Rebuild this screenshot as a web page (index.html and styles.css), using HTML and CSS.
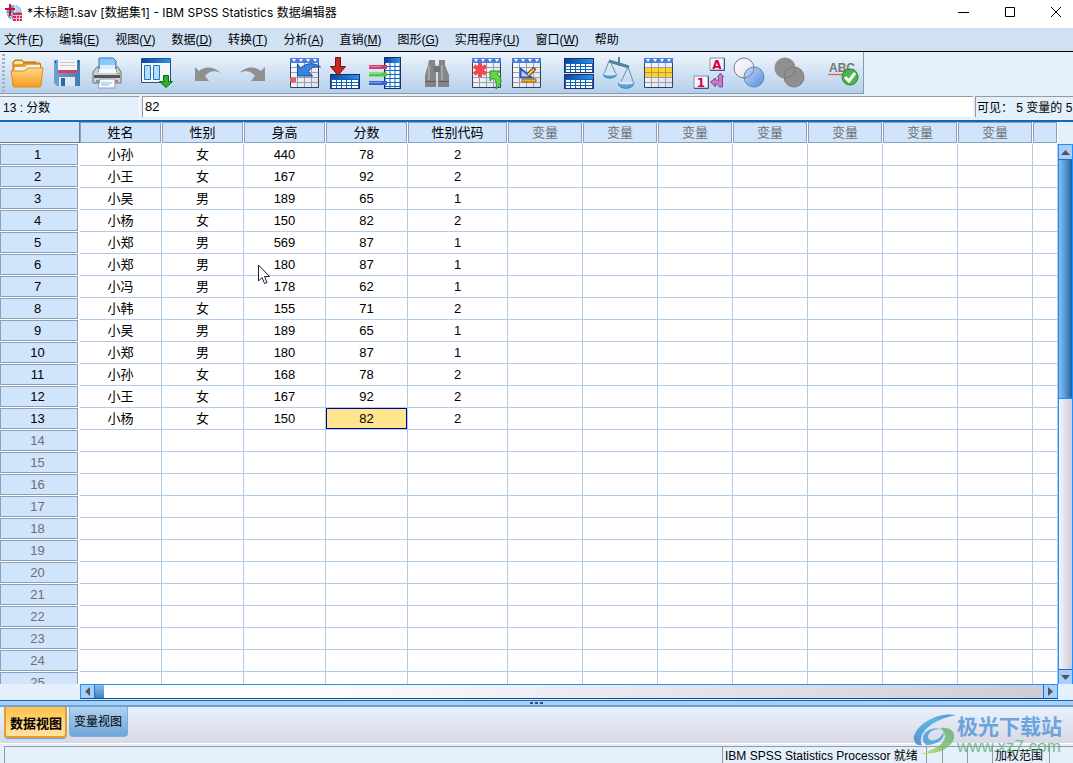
FILE: index.html
```html
<!DOCTYPE html>
<html lang="zh-CN">
<head>
<meta charset="utf-8">
<title>*未标题1.sav [数据集1] - IBM SPSS Statistics 数据编辑器</title>
<link rel="stylesheet" href="styles.css">
</head>
<body>
<svg class="defs" aria-hidden="true">
  <defs>
    <linearGradient id="gBlue" x1="0" x2="1"><stop offset="0" stop-color="#0a45a8"/><stop offset="1" stop-color="#2b93ea"/></linearGradient>
    <linearGradient id="gGold" x1="0" y1="0" x2="0" y2="1"><stop offset="0" stop-color="#ffd98a"/><stop offset="1" stop-color="#f79a1c"/></linearGradient>
    <linearGradient id="gPaper" x1="0" y1="0" x2="1" y2="1"><stop offset="0" stop-color="#fff"/><stop offset="1" stop-color="#dcdfee"/></linearGradient>
    <linearGradient id="gSky" x1="0" y1="0" x2="1" y2="1"><stop offset="0" stop-color="#c8def8"/><stop offset="1" stop-color="#5588e0"/></linearGradient>
    <linearGradient id="gDisk" x1="0" y1="0" x2="1" y2="0"><stop offset="0" stop-color="#6ea3cf"/><stop offset="1" stop-color="#3f7eb5"/></linearGradient>
    <linearGradient id="gMarkBlue" x1="1" y1="0" x2="0" y2="1"><stop offset="0" stop-color="#3a78c4"/><stop offset="0.4" stop-color="#3fa9e6"/><stop offset="1" stop-color="#3c7fc8"/></linearGradient>
    <linearGradient id="gMarkGreen" x1="1" y1="0" x2="0" y2="1"><stop offset="0" stop-color="#5fae78"/><stop offset="0.5" stop-color="#6fc06a"/><stop offset="1" stop-color="#d3dc4c"/></linearGradient>
    <g id="sheet">
      <path d="M1.500 1.500h28v29h-28z" fill="url(#gPaper)" stroke="#34425e"/>
      <path d="M1 1h29v5H1z" fill="#4a7ee0"/>
      <path d="M3 2h4l-2 3zM10 2h4l-2 3zM17 2h4l-2 3zM24 2h4l-2 3z" fill="#fff"/>
      <path d="M8.500 6v24M15.500 6v24M22.500 6v24M2 10.500h27M2 15.500h27M2 20.500h27M2 25.500h27" stroke="#9a9fae" fill="none"/>
    </g>
    <g id="strip">
      <path d="M1 0h30v15H1z" fill="#262b60"/>
      <path d="M2 1h28v4H2z" fill="url(#gBlue)"/>
      <path d="M2 5h28v9H2z" fill="#0d62b8"/>
      <path d="M3 6h4v2H3zM8 6h4v2H8zM13 6h4v2h-4zM18 6h4v2h-4zM23 6h6v2h-6zM3 9h4v2H3zM8 9h4v2H8zM13 9h4v2h-4zM18 9h4v2h-4zM23 9h6v2h-6zM3 12h4v2H3zM8 12h4v2H8zM13 12h4v2h-4zM18 12h4v2h-4zM23 12h6v2h-6z" fill="#fff"/>
    </g>
  </defs>
</svg>

<div class="app">
  <header class="titlebar">
    <svg class="logo" viewBox="0 0 18 18"><circle cx="9" cy="8.500" r="7.500" fill="#6f9cc9"/><path d="M9 1a8 8 0 0 1 7 7H9z" fill="#b9d0e6"/><path d="M3 3l4 13M10 1v15M2 10h14" stroke="#e3edf6" fill="none"/><path d="M4 0h2v4h4v2H6v6H4V6H0V4h4z" fill="#c8102e"/><path d="M8 9h9v8H8z" fill="#d42a4c"/><path d="M8 11.500h9M8 14.500h9M11.500 12v5M14.500 12v5" stroke="#f3c3cd"/></svg>
    <h1 class="title">*未标题1.sav [数据集1] - IBM SPSS Statistics 数据编辑器</h1>
    <div class="window-buttons">
      <button type="button" aria-label="最小化"><svg viewBox="0 0 12 12"><path d="M0 6.500h11"/></svg></button>
      <button type="button" aria-label="最大化"><svg viewBox="0 0 12 12"><path d="M1.500 1.500h9v9h-9z"/></svg></button>
      <button type="button" aria-label="关闭"><svg viewBox="0 0 12 12"><path d="M1 1l10 10M11 1L1 11"/></svg></button>
    </div>
  </header>

  <nav class="menubar">
    <button type="button">文件(<u>F</u>)</button>
    <button type="button">编辑(<u>E</u>)</button>
    <button type="button">视图(<u>V</u>)</button>
    <button type="button">数据(<u>D</u>)</button>
    <button type="button">转换(<u>T</u>)</button>
    <button type="button">分析(<u>A</u>)</button>
    <button type="button">直销(<u>M</u>)</button>
    <button type="button">图形(<u>G</u>)</button>
    <button type="button">实用程序(<u>U</u>)</button>
    <button type="button">窗口(<u>W</u>)</button>
    <button type="button">帮助</button>
  </nav>

  <div class="toolbar-row">
    <div class="toolbar" role="toolbar">
      <span class="grip"></span>
      <div class="group first">
        <button type="button" aria-label="打开"><svg viewBox="0 0 32 32"><path d="M2 9V5l2-2h7l2 2h12v4z" fill="#e89a20" stroke="#b96c0c"/><path d="M3 5l2-1h6l2 3h12v2H3z" fill="#ffe4a0"/><path d="M2 9l1-1h8l2-2h16l1 3-1 19H2z" fill="#f6a623" stroke="#c4720e"/><path d="M4 10h10l2-2h13v7H3z" fill="#e9f3fc"/><path d="M0 14h13l4-3h15l-2 17-1 2H3l-1-2z" fill="url(#gGold)" stroke="#e8890c"/></svg></button>
        <button type="button" aria-label="保存"><svg viewBox="0 0 32 32"><path d="M3 3h26v26H6l-3-3z" fill="url(#gDisk)"/><path d="M7 3h19v12H7z" fill="#f2f4f8"/><path d="M9 5.500h15M9 8.500h15" stroke="#c3c8d4"/><path d="M7 13h19v3H7z" fill="#e23a5c"/><path d="M8 20h16v9H8z" fill="#dfe6ef"/><path d="M10 21h4v8h-4z" fill="#31689c"/><path d="M4 4h1v2H4zM27 4h1v2h-1z" fill="#285b8c"/></svg></button>
        <button type="button" aria-label="打印"><svg viewBox="0 0 32 32"><path d="M8 1h14l3 3v12H8z" fill="#8ec8f6" stroke="#3578b4"/><path d="M9 8h15v8H9z" fill="#d6edff"/><path d="M6 10h2v5h17v-5h2l3 5v11H2V15z" fill="#cfcfd2" stroke="#707076"/><path d="M8 12h17v4H8z" fill="#f5f9fd"/><path d="M3 18h26v3H3z" fill="#55565c"/><path d="M5 23h22v3H5z" fill="#8d8e94"/><path d="M9 22h15v9H7z" fill="#f6faff" stroke="#91a0b2"/><path d="M10 26h11M10 28h8" stroke="#7dbbe9"/><path d="M26 16h3v1h-3z" fill="#66b82e"/></svg></button>
      </div>
      <div class="group">
        <button type="button" aria-label="对话框调用"><svg viewBox="0 0 32 32"><path d="M.5 1.500h29v24H.5z" fill="#f4f7fc" stroke="#2f4f88"/><path d="M1 2h28v4H1z" fill="url(#gBlue)"/><path d="M3.500 8.500h6v14h-6zM12.500 8.500h6v14h-6z" fill="#b6dcfb" stroke="#2076bd"/><path d="M22.500 18.500h5v6h4l-6.500 6-6.500-6h4z" fill="#2eaf28" stroke="#116b14"/></svg></button>
      </div>
      <div class="group loose">
        <button type="button" aria-label="撤销"><svg viewBox="0 0 32 32"><path d="M4 10l4 4c6-5 14-5 22 2-7-3-12-2-16 3l4 5H4z" fill="#909090"/></svg></button>
        <button type="button" aria-label="重做"><svg viewBox="0 0 32 32"><path d="M30 10l-4 4c-6-5-14-5-22 2 7-3 12-2 16 3l-4 5h14z" fill="#909090"/></svg></button>
      </div>
      <div class="group wide">
        <button type="button" aria-label="转至个案"><svg viewBox="0 0 32 32"><use href="#sheet"/><path d="M1 21h6v4H1z" fill="#ee5866"/><path d="M8.500 7l3 4c6-5 13-6 20-1-8-1-10 1-12 5l4 4h-15z" fill="#3c83dc" stroke="#124c9e"/></svg></button>
        <button type="button" aria-label="转至变量"><svg viewBox="0 0 32 32"><use href="#strip" y="17"/><path d="M6.500.5h5v9h5l-7.500 9-7.500-9h5z" fill="#c8281c" stroke="#6f1410"/></svg></button>
        <button type="button" aria-label="变量"><svg viewBox="0 0 32 32"><path d="M15 0h17v32H15z" fill="#262b60"/><path d="M16 1h15v5H16z" fill="url(#gBlue)"/><path d="M16 6h15v25H16z" fill="#0d69c4"/><path d="M18.500 6v25M23.500 6v25M28.500 6v25" stroke="#fff" stroke-width="4" stroke-dasharray="3 1"/><path d="M0 10h18" stroke="#d43868" stroke-width="4"/><path d="M0 17.500h18" stroke="#57c637" stroke-width="4"/><path d="M0 26h18" stroke="#3a64dc" stroke-width="4"/><path d="M0 9.500h12M0 16.500h12M0 25.500h12" stroke="#fff" opacity=".4"/></svg></button>
      </div>
      <div class="group mid">
        <button type="button" aria-label="查找"><svg viewBox="0 0 32 32"><path d="M8 3h6v4l1 3v20H4V18L7 8zM18 3h6v5l4 10v12H17V10l1-3z" fill="#858585"/><path d="M13 9h6v6h-6z" fill="#747474"/><path d="M4 24.500h11M17 24.500h11" stroke="#5f5f5f"/><path d="M8 8v15M21 8v15" stroke="#a6a6a6" stroke-width="2"/></svg></button>
      </div>
      <div class="group">
        <button type="button" aria-label="插入个案"><svg viewBox="0 0 32 32"><use href="#sheet"/><path d="M9 6v14M3 9l12 8M15 9L3 17" stroke="#f4464c" stroke-width="4"/><path d="M19 14h10l-3 3c6 4 5 10-1 15 1-6 0-9-3-11l-3 3z" fill="#65d544" stroke="#229522"/></svg></button>
        <button type="button" aria-label="插入变量"><svg viewBox="0 0 32 32"><use href="#sheet"/><path d="M9.500 11.500v9h11z" fill="#b9d4fa" stroke="#2659c0" stroke-width="2"/><path d="M17 18l7-7" stroke="#694813" stroke-width="4"/><path d="M17 18l6-6" stroke="#f3cc56" stroke-width="2"/><path d="M11 22h14v3H11z" fill="#f6b31b" stroke="#9e640b"/></svg></button>
      </div>
      <div class="group mid">
        <button type="button" aria-label="拆分文件"><svg viewBox="0 0 32 32"><use href="#strip" y="1"/><use href="#strip" y="17"/></svg></button>
        <button type="button" aria-label="加权个案"><svg viewBox="0 0 32 32"><path d="M16 0v9" stroke="#55839c" stroke-width="2"/><path d="M6 4l20 6" stroke="#55839c" stroke-width="3"/><path d="M6 4L1 17M7 4l6 13M25 10l-8 17M25 10l6 17" stroke="#668fa9" fill="none"/><path d="M0 17h14c-1 5-13 6-14 0zM15 26h16c-1 7-15 7-16 0z" fill="#5ba5dc" stroke="#3d83af"/><ellipse cx="7" cy="17" rx="7" ry="1.500" fill="#d6ebf7"/><ellipse cx="23" cy="26" rx="8" ry="1.500" fill="#d6ebf7"/></svg></button>
        <button type="button" aria-label="选择个案"><svg viewBox="0 0 32 32"><use href="#sheet"/><path d="M2 11h27v9H2z" fill="#fad42c"/><path d="M2 15.500h27M8.500 11v9M15.500 11v9M22.500 11v9" stroke="#b89a36"/></svg></button>
      </div>
      <div class="group">
        <button type="button" aria-label="值标签"><svg viewBox="0 0 32 32"><path d="M17 1h14v12H17zM1 19h14v12H1z" fill="#f5f8fd" stroke="#8590ad"/><path d="M31.500 1v12.500H17M15.500 19v12.500H1" stroke="#44548a" fill="none"/><text x="24" y="12" class="glyph">A</text><text x="8" y="30" class="glyph">1</text><path d="M27.500 16l3 4h-1v10h-3c-1-2-3-3-4-3v3l-5-5 5-4v2c1 0 2 0 3 1v-4h-1z" fill="#c878cc" stroke="#8a4590"/></svg></button>
        <button type="button" aria-label="使用变量集"><svg viewBox="0 0 32 32"><circle cx="11" cy="11" r="10" fill="url(#gPaper)"/><circle cx="21" cy="20" r="10" fill="url(#gSky)" stroke="#70809d"/><circle cx="11" cy="11" r="10" fill="none" stroke="#70809d"/></svg></button>
        <button type="button" aria-label="显示所有变量"><svg viewBox="0 0 32 32"><circle cx="12" cy="11" r="10.500" fill="#8f8f8f"/><circle cx="21" cy="20" r="10" fill="#8f8f8f" stroke="#7b7b7b"/><path d="M11 21a10 10 0 0 0 11-11" fill="none" stroke="#7b7b7b"/></svg></button>
      </div>
      <div class="group wide">
        <button type="button" aria-label="拼写检查"><svg viewBox="0 0 32 32"><text x="15" y="15" class="abc">ABC</text><path d="M1 18l2-1 2 1 2-1 2 1 2-1 2 1 2-1" fill="none" stroke="#e33a20"/><circle cx="23" cy="20" r="8" fill="#4eb44d" stroke="#278735"/><path d="M18 20l4 4 6-8" fill="none" stroke="#fff" stroke-width="3"/></svg></button>
      </div>
    </div>
  </div>

  <div class="editbar">
    <output class="cell-name" for="cell-value">13 : 分数</output>
    <input class="cell-value" id="cell-value" aria-label="13 : 分数" value="82">
    <div class="visible-info">可见： 5 变量的 5</div>
  </div>

  <main class="editor">
    <div class="sheet">
      <table class="grid">
        <colgroup><col class="c-head"><col class="c-var" span="4"><col class="c-code"><col class="c-empty" span="7"><col></colgroup>
        <thead>
          <tr><td class="corner"></td><th>姓名</th><th>性别</th><th>身高</th><th>分数</th><th>性别代码</th><th class="off">变量</th><th class="off">变量</th><th class="off">变量</th><th class="off">变量</th><th class="off">变量</th><th class="off">变量</th><th class="off">变量</th><th class="off"></th></tr>
        </thead>
        <tbody>
          <tr><th>1<td>小孙<td>女<td>440<td>78<td>2<td><td><td><td><td><td><td><td>
          <tr><th>2<td>小王<td>女<td>167<td>92<td>2<td><td><td><td><td><td><td><td>
          <tr><th>3<td>小吴<td>男<td>189<td>65<td>1<td><td><td><td><td><td><td><td>
          <tr><th>4<td>小杨<td>女<td>150<td>82<td>2<td><td><td><td><td><td><td><td>
          <tr><th>5<td>小郑<td>男<td>569<td>87<td>1<td><td><td><td><td><td><td><td>
          <tr><th>6<td>小郑<td>男<td>180<td>87<td>1<td><td><td><td><td><td><td><td>
          <tr><th>7<td>小冯<td>男<td>178<td>62<td>1<td><td><td><td><td><td><td><td>
          <tr><th>8<td>小韩<td>女<td>155<td>71<td>2<td><td><td><td><td><td><td><td>
          <tr><th>9<td>小吴<td>男<td>189<td>65<td>1<td><td><td><td><td><td><td><td>
          <tr><th>10<td>小郑<td>男<td>180<td>87<td>1<td><td><td><td><td><td><td><td>
          <tr><th>11<td>小孙<td>女<td>168<td>78<td>2<td><td><td><td><td><td><td><td>
          <tr><th>12<td>小王<td>女<td>167<td>92<td>2<td><td><td><td><td><td><td><td>
          <tr><th>13<td>小杨<td>女<td>150<td class="active">82<td>2<td><td><td><td><td><td><td><td>
        </tbody>
        <tbody class="unused">
          <tr><th>14<td><td><td><td><td><td><td><td><td><td><td><td><td>
          <tr><th>15<td><td><td><td><td><td><td><td><td><td><td><td><td>
          <tr><th>16<td><td><td><td><td><td><td><td><td><td><td><td><td>
          <tr><th>17<td><td><td><td><td><td><td><td><td><td><td><td><td>
          <tr><th>18<td><td><td><td><td><td><td><td><td><td><td><td><td>
          <tr><th>19<td><td><td><td><td><td><td><td><td><td><td><td><td>
          <tr><th>20<td><td><td><td><td><td><td><td><td><td><td><td><td>
          <tr><th>21<td><td><td><td><td><td><td><td><td><td><td><td><td>
          <tr><th>22<td><td><td><td><td><td><td><td><td><td><td><td><td>
          <tr><th>23<td><td><td><td><td><td><td><td><td><td><td><td><td>
          <tr><th>24<td><td><td><td><td><td><td><td><td><td><td><td><td>
          <tr><th>25<td><td><td><td><td><td><td><td><td><td><td><td><td>
        </tbody>
      </table>
    </div>
    <div class="vscroll">
      <button type="button" aria-label="向上滚动"><svg viewBox="0 0 9 5"><path d="M0 5l4.500-5L9 5z"/></svg></button>
      <div class="vtrack"><div class="vthumb"></div></div>
      <button type="button" aria-label="向下滚动"><svg viewBox="0 0 9 5"><path d="M0 0l4.500 5L9 0z"/></svg></button>
    </div>
    <div class="hscroll">
      <button type="button" aria-label="向左滚动"><svg viewBox="0 0 5 9"><path d="M5 0L0 4.500 5 9z"/></svg></button>
      <div class="htrack"><div class="hthumb"></div></div>
      <button type="button" aria-label="向右滚动"><svg viewBox="0 0 5 9"><path d="M0 0l5 4.500L0 9z"/></svg></button>
    </div>
    <svg class="pointer" viewBox="0 0 13 20"><path d="M1.500 1v16l3.500-3.500 2.500 6 2.500-1-2.500-6h5z" fill="#fff" stroke="#1c1c2c"/></svg>
  </main>

  <div class="splitter"><i></i><i></i><i></i></div>

  <div class="tabs" role="tablist">
    <button type="button" class="tab selected" role="tab" aria-selected="true">数据视图</button>
    <button type="button" class="tab" role="tab" aria-selected="false">变量视图</button>
  </div>

  <footer class="statusbar">
    <span class="s-message"></span>
    <span class="s-processor">IBM SPSS Statistics Processor 就绪</span>
    <span class="s-small"></span>
    <span class="s-mid"></span>
    <span class="s-mid"></span>
    <span class="s-weight">加权范围</span>
    <span class="s-last"></span>
  </footer>

  <div class="watermark">
    <svg viewBox="0 0 44 42"><path d="M43 2C28-1 6 8 1 23c-1 7 3 10 8 9C4 23 14 8 43 2z" fill="url(#gMarkBlue)"/><path d="M13 32C5 24 14 13 27 16c-8 0-12 4-12 8 1 4 4 4 7 3 4-1 7-4 8-8 3 7-7 13-17 13z" fill="#419bd8"/><path d="M27 15c13-2 18 7 11 16-7 8-18 10-31 10 13-4 24-9 25-17 0-4-2-7-5-9z" fill="url(#gMarkGreen)"/></svg>
    <div class="wm-text"><b>极光下载站</b><span>www.xz7.com</span></div>
  </div>
</div>
</body>
</html>
```
FILE: styles.css
```css
* { box-sizing: border-box; }

body {
  margin: 0;
  background: #e4f0fc;
  color: #000;
  font: 13px/16px "Liberation Sans", "Noto Sans CJK SC", sans-serif;
}

button {
  margin: 0;
  padding: 0;
  border: 0;
  background: none;
  color: inherit;
  font: inherit;
}

svg { display: block; }
.defs { position: absolute; width: 0; height: 0; }

.app {
  position: relative;
  display: flex;
  flex-direction: column;
  height: 100vh;
  overflow: hidden;
}

/* Title bar */
.titlebar {
  display: flex;
  align-items: center;
  flex: none;
  height: 28px;
  padding: 0 6px 0 5px;
  background: #fff;
}
.logo { width: 18px; height: 18px; margin: 0 4px 2px 0; }
.title {
  flex: 1;
  margin: 0 0 2px;
  font: 12px/16px Inter, "Noto Sans CJK SC", sans-serif;
  white-space: nowrap;
}
.window-buttons { display: flex; margin-bottom: 4px; }
.window-buttons button { width: 46px; padding: 0 17px; }
.window-buttons button:last-child { padding-right: 5px; width: 34px; }
.window-buttons svg { width: 12px; height: 12px; fill: none; stroke: #000; }

/* Menu bar */
.menubar {
  display: flex;
  flex: none;
  gap: 16px;
  height: 24px;
  padding: 0 4px;
  border-bottom: 1px solid #000;
  background: #cfe1f3;
  font-size: 12px;
  white-space: nowrap;
}

/* Toolbar */
.toolbar-row { display: flex; flex: none; height: 42px; }
.toolbar {
  display: flex;
  align-items: center;
  width: 864px;
  border-right: 1px solid #8d98a8;
  border-bottom: 1px solid #8d98a8;
  background: linear-gradient(#eef5fd, #b4cfeb);
}
.grip {
  width: 3px;
  height: 38px;
  margin-left: 2px;
  background: repeating-linear-gradient(#a5b0c0 0 2px, transparent 2px 4px);
}
.group { display: flex; gap: 8px; margin-left: 18px; }
.group.first { margin-left: 6px; }
.group.mid { margin-left: 20px; }
.group.wide { margin-left: 22px; }
.group.loose { gap: 12px; }
.group svg { width: 32px; height: 32px; overflow: visible; }
.glyph { font: bold 12px "DejaVu Sans", sans-serif; fill: #e00040; text-anchor: middle; }
.abc { font: bold 12px "Liberation Sans", sans-serif; fill: #777; text-anchor: middle; }

/* Cell editor */
.editbar { display: flex; flex: none; height: 28px; padding: 2px 0 3px; border-bottom: 2px solid #1468b8; }
.cell-name {
  width: 140px;
  padding: 3px;
  border-top: 1px solid #999;
  border-right: 1px solid #fff;
  font-size: 12px;
}
.cell-value {
  flex: 1;
  min-width: 0;
  margin: 0 2px;
  padding: 0 2px;
  border: solid #999;
  border-width: 1px 0 0 1px;
  background: #fff;
  font: inherit;
}
.visible-info {
  width: 98px;
  padding: 3px 0 0 1px;
  border: solid #999;
  border-width: 1px 0 0 1px;
  font-size: 12px;
  white-space: nowrap;
}

/* Data grid */
.editor {
  position: relative;
  display: grid;
  flex: 1;
  grid-template: minmax(0, 1fr) 16px / minmax(0, 1fr) 15px;
  min-height: 0;
}
.sheet { overflow: hidden; background: #fff; }
.grid { width: 100%; table-layout: fixed; border-spacing: 0; }
.c-head { width: 80px; }
.c-var { width: 82px; }
.c-code { width: 100px; }
.c-empty { width: 75px; }
.grid th, .grid td { height: 22px; padding: 0; font-weight: normal; line-height: 20px; text-align: center; }
.grid tbody td { border: solid #b0cce8; border-width: 0 1px 1px 0; }
.grid th, .grid .corner {
  border: solid #fff;
  border-width: 0 1px 1px 0;
  background: #d0e4fb;
  box-shadow: inset 0 0 0 1px #8f9fb8;
}
.grid tbody th { border-right-width: 2px; padding-right: 3px; }
.grid .corner { border-width: 0 0 1px; box-shadow: inset -1px -1px #6d7b90; }
.grid .off, .unused th { color: #6e7073; }
.grid .active { background: #ffe58c; box-shadow: inset 0 0 0 1px #0000a0; }

/* Scroll bars */
.vscroll, .hscroll { display: flex; background: #a9cffa; }
.vscroll { flex-direction: column; margin-top: 22px; border: solid #1e90ff; border-width: 1px 1px 0; }
.vscroll button, .hscroll button { display: grid; place-items: center; flex: none; background: #a9cffa; }
.vscroll button { height: 14px; }
.vscroll svg { width: 9px; height: 5px; }
.vscroll path, .hscroll path { fill: #555; }
.vtrack { flex: 1; border: solid #1e70c8; border-width: 1px 0; background: linear-gradient(90deg, #f4f3f7, #cfccd8); }
.vthumb { height: 47%; border-bottom: 1px solid #1e90ff; background: linear-gradient(90deg, #8abdea, #4a8dcc 60%, #1d5fa8); }
.hscroll { grid-column: 1; height: 15px; margin-left: 80px; border: 1px solid #1e90ff; border-bottom-color: #0d4c98; }
.hscroll button { width: 13px; }
.hscroll svg { width: 5px; height: 9px; }
.htrack { flex: 1; border: solid #1e70c8; border-width: 0 1px; background: linear-gradient(90deg, #fff 20%, #cfccd8); }
.hthumb { width: 9px; height: 100%; background: linear-gradient(#8abdea, #3d82c4); }

.pointer { position: absolute; left: 257px; top: 142px; width: 13px; height: 20px; }

.splitter {
  display: flex;
  flex: none;
  align-items: center;
  justify-content: center;
  gap: 2px;
  height: 7px;
  border-top: 1px solid #1468b8;
  border-bottom: 2px solid #6fa2d0;
  background: #a9cffa;
}
.splitter i { width: 3px; height: 2px; background: #334f78; }

/* View tabs */
.tabs {
  display: flex;
  flex: none;
  align-items: flex-start;
  gap: 2px;
  height: 36px;
  padding-left: 4px;
  background: linear-gradient(#e8f2fc, #d9d9e6);
}
.tab {
  height: 30px;
  padding: 0 5px 0 4px;
  border: 1px solid #7faed8;
  border-top: 0;
  border-radius: 0 0 4px 4px;
  background: linear-gradient(#b0d2f0, #6ea5d8);
  font-size: 12px;
}
.tab.selected {
  height: 31px;
  padding: 4px 3px 0 4px;
  border: 2px solid #dfa030;
  border-top: 0;
  background: linear-gradient(#ffc24a, #ffe3a0);
  box-shadow: 0 1px #6ea5d8;
  font-size: 13px;
  font-weight: bold;
}

/* Status bar */
.statusbar {
  display: flex;
  flex: none;
  height: 20px;
  padding: 2px 0 0 4px;
  border-top: 1px solid #fff;
  font-size: 12px;
  white-space: nowrap;
}
.statusbar span { border: solid #999; border-width: 1px 0 0 1px; padding-left: 2px; line-height: 18px; }
.s-message { flex: 1; }
.s-processor { width: 204px; }
.s-small { width: 16px; }
.s-mid { width: 25px; }
.s-weight { width: 57px; }
.s-last { width: 24px; }

/* Site mark */
.watermark { position: absolute; right: 11px; bottom: 8px; display: flex; opacity: .8; }
.watermark svg { width: 44px; height: 42px; }
.wm-text { display: flex; flex-direction: column; white-space: nowrap; }
.wm-text b { color: #4f94d8; font: bold 21px/25px "Noto Sans CJK SC", sans-serif; }
.wm-text span { color: #5fb47c; font: 17px/17px "Liberation Sans", sans-serif; }
```
